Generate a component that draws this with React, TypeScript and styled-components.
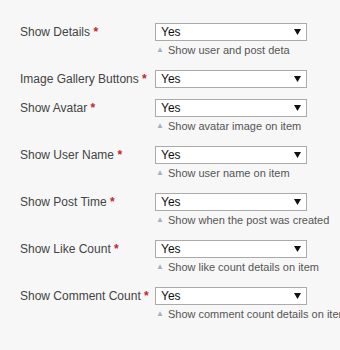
import styled, { createGlobalStyle } from 'styled-components';

const GlobalStyle = createGlobalStyle`
  body {
    margin: 0;
    background: #f7f7f7;
    font-family: 'Liberation Sans', Arial, sans-serif;
  }
`;

type Field = { label: string; hint?: string };

const fields: Field[] = [
  { label: 'Show Details', hint: 'Show user and post deta' },
  { label: 'Image Gallery Buttons' },
  { label: 'Show Avatar', hint: 'Show avatar image on item' },
  { label: 'Show User Name', hint: 'Show user name on item' },
  { label: 'Show Post Time', hint: 'Show when the post was created' },
  { label: 'Show Like Count', hint: 'Show like count details on item' },
  { label: 'Show Comment Count', hint: 'Show comment count details on item' },
];

const App = () => {
  return (
    <>
      <GlobalStyle />
      <Form>
        {fields.map((f) => (
          <Row key={f.label}>
            <Label>
              {f.label} <Required>*</Required>
            </Label>
            <Field>
              <SelectBox>
                <span>Yes</span>
                <svg width="7" height="6" viewBox="0 0 7 6">
                  <path d="M0 0 H7 L3.5 6 Z" fill="#111" />
                </svg>
              </SelectBox>
              {f.hint && (
                <Hint>
                  <HintArrow>▲</HintArrow>
                  {f.hint}
                </Hint>
              )}
            </Field>
          </Row>
        ))}
      </Form>
    </>
  );
};

export default App;

const Form = styled.div`
  padding: 23px 0 0 20px;
  width: 320px;
  overflow: hidden;
`;

const Row = styled.div`
  display: grid;
  grid-template-columns: 135px 1fr;
  margin-bottom: 11px;
`;

const Label = styled.div`
  font-size: 12px;
  line-height: 18px;
  color: #444;
  white-space: nowrap;
`;

const Required = styled.span`
  color: #c0272d;
  font-weight: bold;
`;

const Field = styled.div`
  display: flex;
  flex-direction: column;
  min-width: 0;
`;

const SelectBox = styled.div`
  box-sizing: border-box;
  width: 152px;
  height: 18px;
  border: 1px solid #aaa;
  background: #fff;
  display: flex;
  align-items: center;
  justify-content: space-between;
  padding: 0 5px 0 5px;
  font-size: 12px;
  color: #111;
`;

const Hint = styled.div`
  margin: 2px 0 0;
  height: 16px;
  font-size: 11px;
  line-height: 14px;
  color: #555;
  white-space: nowrap;
`;

const HintArrow = styled.span`
  display: inline-block;
  line-height: 1;
  color: #a9b0b6;
  font-size: 8px;
  margin: 0 4px 0 1px;
  vertical-align: 2px;
`;
